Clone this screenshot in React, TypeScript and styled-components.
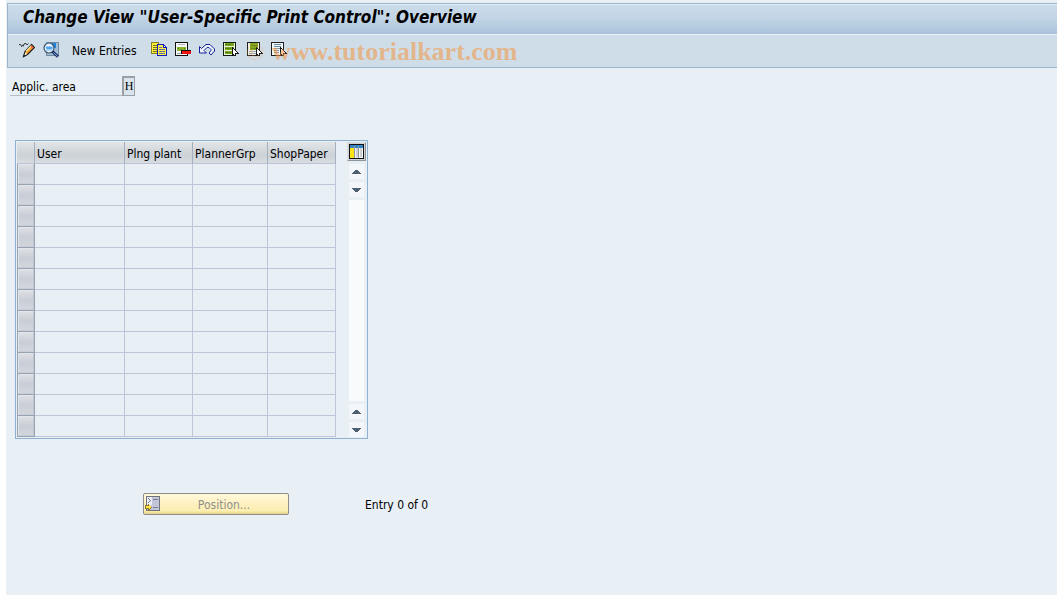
import React from 'react';
import styled, { createGlobalStyle } from 'styled-components';

const GlobalStyle = createGlobalStyle`
  * { box-sizing: border-box; }
  body {
    margin: 0;
    background: #fff;
    color: #000;
    font: 12px/16px "DejaVu Sans Condensed", "DejaVu Sans", sans-serif;
    font-stretch: condensed;
  }
  button, input {
    font: inherit;
    font-stretch: condensed;
    color: inherit;
    margin: 0;
    padding: 0;
    border: 0;
    background: none;
  }
`;

const Page = styled.div`
  min-height: 100vh;
  margin-left: 6px;
  padding: 3px 0 16px 1px;
  background: #e8f0f6;
`;

const Header = styled.header`
  border: 1px solid #9fb6ca;
  border-right: 0;
`;

const TitleBar = styled.div`
  height: 31px;
  padding: 0 15px;
  border-top: 1px solid #e4eef6;
  border-bottom: 1px solid #e9f1f7;
  background: linear-gradient(#cbdcea, #c3d5e6 45%, #a9c3dc);
`;

const Title = styled.h1`
  margin: 0;
  font-size: 17px;
  line-height: 24px;
  font-style: italic;
  font-weight: bold;
  white-space: nowrap;
`;

const Toolbar = styled.div`
  position: relative;
  display: flex;
  align-items: center;
  height: 32px;
  padding: 0 7px 2px;
  background: #cfdde8;
`;

const IconButton = styled.button`
  display: flex;
  flex: none;
  justify-content: center;
  width: 24px;
  height: 16px;
`;

const TextButton = styled.button`
  flex: none;
  width: 84px;
  padding: 2px 0 0 9px;
  text-align: left;
  white-space: nowrap;
`;

const Watermark = styled.span`
  position: absolute;
  left: 238px;
  top: 0;
  display: flex;
  gap: 8px;
  font: bold 26px/34px "Liberation Serif", serif;
  color: rgba(243, 150, 67, 0.56);
  pointer-events: none;
  white-space: nowrap;
`;

const Faint = styled.span`
  width: 18px;
  font-weight: normal;
  font-size: 24px;
  opacity: 0.6;
`;

const Content = styled.main`
  padding: 8px 8px 0;
`;

const Field = styled.div`
  display: flex;
  width: 130px;
  margin-left: -5px;
`;

const FieldLabel = styled.label`
  width: 112px;
  height: 20px;
  padding: 3px 0 0 2px;
  border-bottom: 1px solid #b4bcc4;
`;

const FieldInput = styled.input`
  width: 13px;
  height: 20px;
  border: 1px solid #9aa0a6;
  border-width: 2px 1px 1px 2px;
  background: #d9e4ee;
  text-align: center;
  font: 12px/16px "Liberation Serif", serif;
`;

const TableFrame = styled.section`
  display: flex;
  justify-content: space-between;
  width: 353px;
  margin-top: 44px;
  padding: 1px;
  border: 1px solid #8fb0d0;
`;

const Grid = styled.table`
  width: 319px;
  border-collapse: separate;
  border-spacing: 0;
  table-layout: fixed;
`;

const Col = styled.col<{ $w: number }>`
  width: ${(p) => p.$w}px;
`;

const HeadCell = styled.th`
  height: 22px;
  padding: 3px 2px 0;
  border-right: 1px solid #a3afbf;
  border-bottom: 1px solid #bcc4d4;
  background: linear-gradient(#e2e6e9, #d3d8dc 40%, #cdd2d9 65%, #d8dde1);
  font-weight: normal;
  text-align: left;
  white-space: nowrap;
`;

const Cell = styled.td`
  height: 21px;
  padding: 0;
  border-right: 1px solid #bdc5d6;
  border-bottom: 1px solid #bdc5d6;
`;

const SelectorCell = styled.td`
  height: 21px;
  padding: 0;
  border: 1px solid #98a3b1;
  border-top: 0;
`;

const Selector = styled.button`
  display: block;
  width: 100%;
  height: 20px;
  border: 1px solid #e2e5e9;
  border-right-color: #c0c7d0;
  border-bottom-color: #c9ced6;
  background: linear-gradient(#dcdfe3, #c9cdd6 50%, #d2d6dc);
`;

const Side = styled.div`
  display: flex;
  flex-direction: column;
  align-items: center;
  gap: 3px;
  width: 19px;
`;

const SettingsButton = styled.button`
  display: flex;
  align-items: center;
  justify-content: center;
  width: 19px;
  height: 19px;
  border: 1px solid;
  border-color: #dcdfe2 #8e959c #8e959c #dcdfe2;
  background: #cfd3d7;
`;

const ArrowButton = styled.button`
  display: flex;
  align-items: center;
  justify-content: center;
  width: 15px;
  height: 15px;
  background: #f3f6fa;
`;

const Track = styled.div`
  flex: 1;
  width: 15px;
  background: #f8fafc;
`;

const Footer = styled.footer`
  display: flex;
  align-items: center;
  gap: 76px;
  margin-top: 54px;
  padding-left: 128px;
`;

const PositionButton = styled.button`
  display: flex;
  align-items: center;
  width: 146px;
  height: 22px;
  padding: 0 1px;
  border: 1px solid #8f8f88;
  border-radius: 2px;
  background: linear-gradient(#fff8dc, #fef1bf 50%, #fdeeb0 85%, #e4cf86);
  color: #8f8f8f;
`;

const ButtonText = styled.span`
  flex: 1;
  padding-top: 2px;
`;

const Status = styled.span`
  padding-top: 2px;
`;

const Art = styled.svg.attrs({ 'aria-hidden': true })`
  display: block;
  flex: none;
`;

const Icon = ({ children, smooth }: { children: React.ReactNode; smooth?: boolean }) => (
  <Art width="16" height="16" viewBox="0 0 16 16" shapeRendering={smooth ? 'auto' : 'crispEdges'}>
    {children}
  </Art>
);

const PencilIcon = () => (
  <Icon smooth>
    <path d="M0 2.5h1.5l1 2 1.5-2M4 4.500l1.500-3h1.500l1 1.500 1.500-1.500" fill="none" stroke="#333" strokeWidth="1" />
    <path d="M12.500 2.500l3 3-7 7-4 2 1.500-5z" fill="#f7a030" stroke="#1c1c1c" strokeWidth="1.200" />
    <path d="M12.400 3.800l-5.400 5.600" stroke="#ffe9a0" strokeWidth="1.300" />
    <path d="M12.700 3.400l2 2-1.200 1.200-2-2z" fill="#e8624a" />
    <path d="M6.400 10l1.600 2-2.500 1.400z" fill="#fff4dc" />
    <path d="M4 14.900l.9-2 1.300 1z" fill="#111" />
  </Icon>
);

const FindIcon = () => (
  <Icon smooth>
    <path d="M3 0h13v14H3z" fill="#6f8ba4" />
    <path d="M4 1h11v12H4z" fill="#a4bfd6" />
    <path d="M4 1h9v5H4z" fill="#1f84da" />
    <circle cx="6" cy="6" r="5" fill="#eaf5ff" stroke="#3d566e" strokeWidth="1.200" />
    <path d="M2.500 4.500h7v3h-6z" fill="#4ea6ee" />
    <path d="M3 8.500h5" stroke="#b9d8f0" strokeWidth="1" />
    <path d="M9.500 9.500l5.500 5.300" stroke="#172b65" strokeWidth="2.800" />
    <path d="M10.500 10.500l4 3.900" stroke="#9db4d8" strokeWidth="0.900" />
  </Icon>
);

const CopyIcon = () => (
  <Icon>
    <path d="M0 0h8v2h1v10H0z" fill="#8a7f20" />
    <path d="M1 1h6v10H1z" fill="#ffef3c" />
    <path d="M2 3h4v1H2zM2 5h4v1H2zM2 7h4v1H2zM2 9h4v1H2z" fill="#777322" />
    <path d="M6 2h7v1h1v1h1v1h1v9H6z" fill="#0a1abb" />
    <path d="M7 3h5v3h3v7H7z" fill="#fff348" />
    <path d="M8 5h3v1H8zM8 7h6v1H8zM8 9h6v1H8zM8 11h6v1H8z" fill="#6468a1" />
    <path d="M13 4h1v1h-1z" fill="#fff" />
  </Icon>
);

const DeleteIcon = () => (
  <Icon>
    <path d="M0 0h13v14H0z" fill="#111" />
    <path d="M1 1h11v12H1z" fill="#f5f7f8" />
    <path d="M3 2h7v1H3z" fill="#b0b7bd" />
    <path d="M2 5h9v4H2z" fill="#8bb52c" />
    <path d="M3 6h1v1H3zM6 7h1v1H6zM9 6h1v1H9z" fill="#527a10" />
    <path d="M2 11h4v1H2z" fill="#9aa3aa" />
    <path d="M6 8h10v4H6z" fill="#111" />
    <path d="M7 9h9v3H7z" fill="#ef1212" />
  </Icon>
);

const UndoIcon = () => (
  <Icon smooth>
    <path
      d="M.5 4.500l2 2 4.500-4h4l4.500 4.500v2l-3.500 4-2-2 2-2.500v-1l-2-2h-2l-3 3 2.500 2.500h-7z"
      fill="#eef4fc"
      stroke="#14239b"
      strokeWidth="1"
    />
  </Icon>
);

const Cursor = () => (
  <>
    <path d="M9 5h1v1h1v1h1v1h1v1h1v1h1v1h1v1h-3v2h-2v-1h-1v1H9z" fill="#161616" />
    <path d="M10 7h1v1h1v1h1v1h1v1h-2v2h-1v-1h-1z" fill="#fff" />
  </>
);

const SelectAllIcon = () => (
  <Icon>
    <path d="M0 0h13v14H0z" fill="#102010" />
    <path d="M1 1h11v12H1z" fill="#edf3dd" />
    <path d="M2 1h9v3H2zM2 5h9v3H2zM2 9h9v3H2z" fill="#78a51b" />
    <path d="M2 2h6v1H2zM2 6h6v1H2zM2 10h6v1H2z" fill="#568414" />
    <Cursor />
  </Icon>
);

const SelectBlockIcon = () => (
  <Icon>
    <path d="M0 0h13v14H0z" fill="#202020" />
    <path d="M1 1h11v12H1z" fill="#eef0e8" />
    <path d="M3 1h8v7H3z" fill="#80a51f" />
    <path d="M4 3h6v1H4zM4 6h5v1H4z" fill="#5c8418" />
    <path d="M2 9h7v1H2zM2 11h7v1H2z" fill="#95a4ad" />
    <Cursor />
  </Icon>
);

const DeselectIcon = () => (
  <Icon>
    <path d="M0 0h13v14H0z" fill="#202020" />
    <path d="M1 1h11v12H1z" fill="#f1f5f7" />
    <path d="M3 2h7v1H3zM3 4h7v1H3zM3 6h6v1H3zM3 8h5v1H3zM3 10h5v1H3z" fill="#6c91a7" />
    <Cursor />
  </Icon>
);

const ColumnsIcon = () => (
  <Art width="15" height="15" viewBox="0 0 15 15" shapeRendering="crispEdges">
    <path d="M0 0h15v15H0z" fill="#111" />
    <path d="M1 1h13v13H1z" fill="#f4f6f7" />
    <path d="M1 1h13v3H1z" fill="#3386c6" />
    <path d="M1 4h4v10H1z" fill="#ffe414" />
    <path d="M5 2h1v12H5zM9 2h1v12H9z" fill="#8a959f" />
    <path d="M7 4h2v9H7zM11 4h2v9h-2z" fill="#cbd0d5" />
  </Art>
);

const PositionIcon = () => (
  <Icon>
    <path d="M1 0h14v15H1z" fill="#70727c" />
    <path d="M2 1h12v13H2z" fill="#c3c6d9" />
    <path d="M2 1h5v8H2z" fill="#eceef3" />
    <path d="M3 2h1v1h1v1h1v1H5v1H4v1H3V6h1V5h1V4H4V3H3zM8 3h5v1H8zM8 11h5v1H8z" fill="#777c91" />
    <path d="M0 9h3V8h1v1h1v1h1v1h1v1H6v1H5v1H4v1H3v-2H0z" fill="#8c7a26" />
    <path d="M1 10h3V9h1v1h1v2H5v1H4v-1H1z" fill="#ffe24a" />
  </Icon>
);

const Arrow = ({ down }: { down?: boolean }) => (
  <Art width="9" height="6" viewBox="0 0 9 6" shapeRendering="crispEdges">
    {down ? (
      <path d="M0 1h9v1H8v1H7v1H6v1H3V4H2V3H1V2H0z" fill="#4e6070" />
    ) : (
      <path d="M3 1h3v1h1v1h1v1h1v1H0V4h1V3h1V2h1z" fill="#4e6070" />
    )}
  </Art>
);

const leadingTools = [
  { label: 'Display/Change', Glyph: PencilIcon },
  { label: 'Details', Glyph: FindIcon },
];

const entryTools = [
  { label: 'Copy as', Glyph: CopyIcon },
  { label: 'Delete', Glyph: DeleteIcon },
  { label: 'Undo change', Glyph: UndoIcon },
  { label: 'Select all', Glyph: SelectAllIcon },
  { label: 'Select block', Glyph: SelectBlockIcon },
  { label: 'Deselect all', Glyph: DeselectIcon },
];

const columns = [
  { name: 'User', width: 90 },
  { name: 'Plng plant', width: 68 },
  { name: 'PlannerGrp', width: 75 },
  { name: 'ShopPaper', width: 68 },
];

const rows = Array.from({ length: 13 }, (_, i) => i + 1);

export default function App() {
  return (
    <>
      <GlobalStyle />
      <Page>
        <Header>
          <TitleBar>
            <Title>Change View "User-Specific Print Control": Overview</Title>
          </TitleBar>
          <Toolbar>
            {leadingTools.map(({ label, Glyph }) => (
              <IconButton key={label} type="button" aria-label={label}><Glyph /></IconButton>
            ))}
            <TextButton type="button">New Entries</TextButton>
            {entryTools.map(({ label, Glyph }) => (
              <IconButton key={label} type="button" aria-label={label}><Glyph /></IconButton>
            ))}
            <Watermark><Faint>©</Faint>www.tutorialkart.com</Watermark>
          </Toolbar>
        </Header>
        <Content>
          <Field>
            <FieldLabel htmlFor="area">Applic. area</FieldLabel>
            <FieldInput id="area" defaultValue="H" maxLength={1} />
          </Field>
          <TableFrame>
            <Grid>
              <colgroup>
                <Col $w={18} />
                {columns.map((c) => <Col key={c.name} $w={c.width} />)}
              </colgroup>
              <thead>
                <tr>
                  <HeadCell aria-label="Row selection" />
                  {columns.map((c) => <HeadCell key={c.name} scope="col">{c.name}</HeadCell>)}
                </tr>
              </thead>
              <tbody>
                {rows.map((r) => (
                  <tr key={r}>
                    <SelectorCell><Selector type="button" aria-label={`Select row ${r}`} /></SelectorCell>
                    {columns.map((c) => <Cell key={c.name} />)}
                  </tr>
                ))}
              </tbody>
            </Grid>
            <Side>
              <SettingsButton type="button" aria-label="Table settings"><ColumnsIcon /></SettingsButton>
              <ArrowButton type="button" aria-label="Line up"><Arrow /></ArrowButton>
              <ArrowButton type="button" aria-label="Line down"><Arrow down /></ArrowButton>
              <Track />
              <ArrowButton type="button" aria-label="Page up"><Arrow /></ArrowButton>
              <ArrowButton type="button" aria-label="Page down"><Arrow down /></ArrowButton>
            </Side>
          </TableFrame>
          <Footer>
            <PositionButton type="button">
              <PositionIcon />
              <ButtonText>Position...</ButtonText>
            </PositionButton>
            <Status>Entry 0 of 0</Status>
          </Footer>
        </Content>
      </Page>
    </>
  );
}
